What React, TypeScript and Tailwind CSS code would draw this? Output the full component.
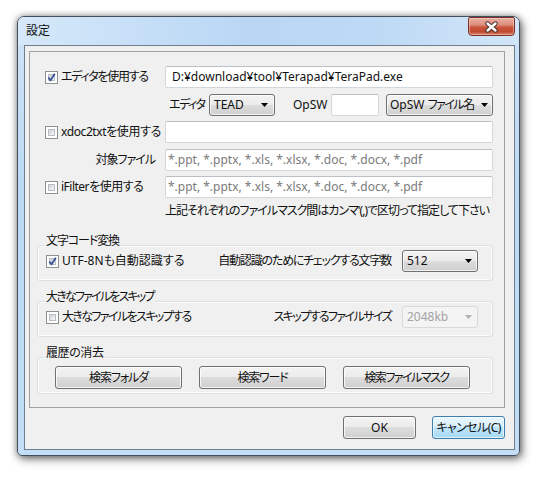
import React from 'react';

const FONT = "font-['Noto_Sans','Noto_Sans_CJK_JP',sans-serif] [font-feature-settings:'palt']";

function Check({ checked }: { checked?: boolean }) {
    return (
        <span className="relative block w-[13px] h-[13px] shrink-0 border border-[#8e8f8f] bg-white p-[2px]">
            <span className="block w-full h-full border border-[#b9bec6] bg-[linear-gradient(135deg,#cdd1d7,#f7f7f7)]" />
            {checked && (
                <svg className="absolute left-[0px] top-[0px]" width="11" height="11" viewBox="0 0 11 11">
                    <path d="M2.3 5.6 L4.6 8.2 L8.8 1.8" fill="none" stroke="#3c5597" strokeWidth="1.9" />
                </svg>
            )}
        </span>
    );
}

function Arrow({ color = '#000' }: { color?: string }) {
    return (
        <svg width="7" height="4" viewBox="0 0 7 4" className="shrink-0">
            <path d="M0 0H7L3.5 4Z" fill={color} />
        </svg>
    );
}

function Combo({ text, className, disabled }: { text: React.ReactNode; className: string; disabled?: boolean }) {
    return (
        <div
            className={`h-[22px] shrink-0 flex items-center justify-between rounded-[3px] border leading-[16px] whitespace-nowrap ${
                disabled
                    ? 'border-[#d9d9d9] bg-[#f4f4f4] text-[#a3a3a3]'
                    : 'border-[#707070] bg-[linear-gradient(#f3f3f3_0%,#ebebeb_50%,#dddddd_50%,#cfcfcf_100%)] shadow-[inset_0_0_0_1px_rgba(255,255,255,0.7)]'
            } ${className}`}
        >
            <span>{text}</span>
            <Arrow color={disabled ? '#b0b0b0' : '#000'} />
        </div>
    );
}

function Btn({ children, className, focused }: { children: React.ReactNode; className: string; focused?: boolean }) {
    return (
        <div
            className={`h-[23px] shrink-0 flex items-center justify-center rounded-[3px] border leading-[16px] whitespace-nowrap ${
                focused
                    ? 'border-[#3c7fb1] bg-[linear-gradient(#eaf6fd_0%,#d9f0fc_50%,#bee6fd_50%,#a7d9f5_100%)] shadow-[inset_0_0_0_1px_rgba(255,255,255,0.6)]'
                    : 'border-[#707070] bg-[linear-gradient(#f3f3f3_0%,#ebebeb_50%,#dddddd_50%,#cfcfcf_100%)] shadow-[inset_0_0_0_1px_rgba(255,255,255,0.75)]'
            } ${className}`}
        >
            {children}
        </div>
    );
}

function TextBox({ value, className, gray }: { value?: string; className: string; gray?: boolean }) {
    return (
        <div
            className={`relative h-[22px] shrink-0 flex items-center bg-white border border-[#d3d6db] border-t-[#bcc0c6] rounded-[2px] leading-[16px] whitespace-nowrap overflow-hidden ${
                gray ? 'text-[#7a7a7a] pl-[2px]' : 'pl-[6px]'
            } ${className}`}
        >
            {value}
        </div>
    );
}

function Group({ title, children, className }: { title: React.ReactNode; children: React.ReactNode; className: string }) {
    return (
        <div className={`relative ml-[7px] w-[456px] rounded-[3px] border border-[#d9e1e6] shadow-[inset_0_0_0_1px_#fbfcfd] ${className}`}>
            <span className="absolute left-[7px] -top-[13px] px-[1px] bg-[#f0f0f0] leading-[16px] whitespace-nowrap">{title}</span>
            {children}
        </div>
    );
}

const MASK = '*.ppt, *.pptx, *.xls, *.xlsx, *.doc, *.docx, *.pdf';

export default function App() {
    return (
        <div className={`w-[541px] h-[478px] bg-white pt-[16px] pl-[17px] text-[12px] text-[#111] ${FONT}`}>
            {/* window */}
            <div className="w-[503px] h-[440px] rounded-t-[7px] rounded-b-[5px] border border-[#434f5c] bg-[linear-gradient(#cfe3f7,#bcd9f4_40%,#c3def6)] shadow-[2px_3px_10px_rgba(0,0,0,0.5),0_0_6px_rgba(0,0,0,0.35)]">
                {/* title bar */}
                <div className="h-[28px] flex items-start justify-between rounded-t-[6px] bg-[linear-gradient(90deg,#d6e8f9,#b9d7f5_45%,#bcd9f5_70%,#d2e5f7)]">
                    <span className="pl-[8px] pt-[6px] leading-[16px] text-[#101010]">設定</span>
                    <div className="mr-[4px] w-[47px] h-[19px] flex items-center justify-center rounded-b-[4px] rounded-t-[2px] border border-[#7b3227] bg-[linear-gradient(#eab1a5_0%,#de8d7c_40%,#c9543c_55%,#c14a32_80%,#d7836c_100%)] shadow-[inset_0_0_0_1px_rgba(255,220,210,0.45)]">
                        <svg width="15" height="12" viewBox="0 0 15 12">
                            <path d="M3.5 2.5 L11.5 9.5 M11.5 2.5 L3.5 9.5" stroke="#4a3330" strokeWidth="4.4" strokeLinecap="round" />
                            <path d="M3.5 2.5 L11.5 9.5 M11.5 2.5 L3.5 9.5" stroke="#ffffff" strokeWidth="2.4" strokeLinecap="round" />
                        </svg>
                    </div>
                </div>

                {/* client area */}
                <div className="ml-[6px] w-[491px] h-[405px] border border-[#6f7d8c] bg-[#f0f0f0]">
                    {/* panel */}
                    <div className="ml-[4px] mt-[5px] w-[476px] border border-[#a0a0a0] pt-[14px] pb-[13px]">
                        {/* editor */}
                        <div className="flex items-center pl-[15px] h-[22px]">
                            <div className="w-[120px] flex items-center gap-[3px]">
                                <Check checked />
                                <span className="leading-[16px] whitespace-nowrap tracking-[-1.3px]">エディタを使用する</span>
                            </div>
                            <TextBox className="w-[328px]" value="D:¥download¥tool¥Terapad¥TeraPad.exe" />
                        </div>

                        <div className="flex items-center pl-[139px] h-[22px] mt-[6px]">
                            <span className="w-[40px] leading-[16px] whitespace-nowrap tracking-[-1.5px]">エディタ</span>
                            <Combo className="w-[66px] pl-[4px] pr-[6px]" text="TEAD" />
                            <span className="ml-[18px] w-[38px] leading-[16px]">OpSW</span>
                            <TextBox className="w-[48px]" />
                            <Combo
                                className="ml-[7px] w-[107px] pl-[3px] pr-[4px]"
                                text={
                                    <>
                                        OpSW <span className="tracking-[-1.5px]">ファイル名</span>
                                    </>
                                }
                            />
                        </div>

                        {/* xdoc2txt */}
                        <div className="flex items-center pl-[15px] h-[22px] mt-[5px]">
                            <div className="w-[120px] flex items-center gap-[3px]">
                                <Check />
                                <span className="leading-[16px] whitespace-nowrap tracking-[-0.4px]">xdoc2txtを使用する</span>
                            </div>
                            <TextBox className="w-[328px]" />
                        </div>

                        <div className="flex items-center pl-[15px] h-[22px] mt-[6px]">
                            <span className="w-[120px] pr-[10px] text-right leading-[16px] tracking-[-1px]">対象ファイル</span>
                            <TextBox className="w-[328px]" gray value={MASK} />
                        </div>

                        {/* iFilter */}
                        <div className="flex items-center pl-[15px] h-[22px] mt-[5px]">
                            <div className="w-[120px] flex items-center gap-[3px]">
                                <Check />
                                <span className="leading-[16px] whitespace-nowrap tracking-[-0.5px]">iFilterを使用する</span>
                            </div>
                            <TextBox className="w-[328px]" gray value={MASK} />
                        </div>

                        <p className="mt-[5px] pl-[135px] leading-[16px] whitespace-nowrap tracking-[-1px]">
                            上記それぞれのファイルマスク間はカンマ'(,)で区切って指定して下さい
                        </p>

                        {/* 文字コード変換 */}
                        <Group
                            title={<span className="tracking-[-1.1px]">文字コード変換</span>}
                            className="mt-[26px] pt-[4px] pb-[8px] pl-[8px] pr-[14px]"
                        >
                            <div className="flex items-center justify-between h-[22px]">
                                <div className="flex items-center gap-[3px]">
                                    <Check checked />
                                    <span className="leading-[16px]">UTF-8Nも自動認識する</span>
                                </div>
                                <div className="flex items-center">
                                    <span className="leading-[16px] whitespace-nowrap tracking-[-1.2px]">自動認識のためにチェックする文字数</span>
                                    <Combo className="ml-[11px] w-[76px] pl-[4px] pr-[5px]" text="512" />
                                </div>
                            </div>
                        </Group>

                        {/* 大きなファイルをスキップ */}
                        <Group
                            title={<span className="tracking-[-1.8px]">大きなファイルをスキップ</span>}
                            className="mt-[20px] pt-[4px] pb-[8px] pl-[8px] pr-[14px]"
                        >
                            <div className="flex items-center justify-between h-[22px]">
                                <div className="flex items-center gap-[3px]">
                                    <Check />
                                    <span className="leading-[16px] tracking-[-1.6px]">大きなファイルをスキップする</span>
                                </div>
                                <div className="flex items-center">
                                    <span className="leading-[16px] whitespace-nowrap tracking-[-1.6px]">スキップするファイルサイズ</span>
                                    <Combo className="ml-[11px] w-[76px] pl-[4px] pr-[5px]" text="2048kb" disabled />
                                </div>
                            </div>
                        </Group>

                        {/* 履歴の消去 */}
                        <Group
                            title={<span className="tracking-[-0.4px]">履歴の消去</span>}
                            className="mt-[20px] pt-[8px] pb-[4px] pl-[17px]"
                        >
                            <div className="flex items-center gap-[17px]">
                                <Btn className="w-[127px] tracking-[-1.1px]">検索フォルダ</Btn>
                                <Btn className="w-[127px] tracking-[-1.2px]">検索ワード</Btn>
                                <Btn className="w-[127px] tracking-[-1.5px]">検索ファイルマスク</Btn>
                            </div>
                        </Group>
                    </div>

                    {/* OK / Cancel */}
                    <div className="mt-[8px] flex justify-end gap-[16px] pr-[9px]">
                        <Btn className="w-[73px]">OK</Btn>
                        <Btn className="w-[73px] tracking-[-0.6px]" focused>
                            キャンセル(C)
                        </Btn>
                    </div>
                </div>
            </div>
        </div>
    );
}
